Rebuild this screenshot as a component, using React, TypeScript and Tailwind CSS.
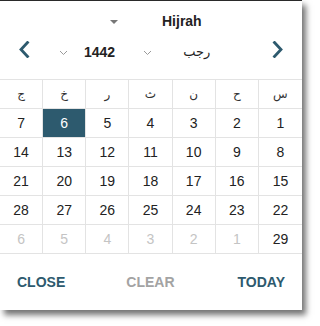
import React from "react"

const teal = "#2d5a6e"

const weekdays = ["ج", "خ", "ر", "ث", "ن", "ح", "س"]

// rows laid out left to right as they appear on screen (calendar is RTL)
const weeks: { d: number; muted?: boolean }[][] = [
  [7, 6, 5, 4, 3, 2, 1].map((d) => ({ d })),
  [14, 13, 12, 11, 10, 9, 8].map((d) => ({ d })),
  [21, 20, 19, 18, 17, 16, 15].map((d) => ({ d })),
  [28, 27, 26, 25, 24, 23, 22].map((d) => ({ d })),
  [
    { d: 6, muted: true },
    { d: 5, muted: true },
    { d: 4, muted: true },
    { d: 3, muted: true },
    { d: 2, muted: true },
    { d: 1, muted: true },
    { d: 29 },
  ],
]

function Chevron({ dir }: { dir: "left" | "right" }) {
  return (
    <svg width="12" height="17" viewBox="0 0 12 17" fill="none">
      <polyline
        points={dir === "left" ? "9.5,1.5 3,8.5 9.5,15.5" : "2.5,1.5 9,8.5 2.5,15.5"}
        stroke={teal}
        strokeWidth="2.8"
        strokeLinecap="square"
      />
    </svg>
  )
}

function SmallDown() {
  return (
    <svg width="9" height="6" viewBox="0 0 9 6" fill="none">
      <polyline points="1,1 4.5,4.5 8,1" stroke="#9a9a9a" strokeWidth="1" />
    </svg>
  )
}

export default function App() {
  return (
    <div className="w-[317px] h-[326px] bg-white font-['Liberation_Sans',Arial,sans-serif]">
      <div className="w-[302px] h-[310px] bg-white border-t border-[#2a2a2a] shadow-[4px_5px_6px_rgba(0,0,0,0.55)] flex flex-col">
        {/* calendar type */}
        <div className="h-[40px] flex items-center">
          <div className="w-[110px]" />
          <svg width="8" height="4" viewBox="0 0 8 4" className="mt-[2px]">
            <polygon points="0,0 8,0 4,4" fill="#777" />
          </svg>
          <div className="w-[44px]" />
          <span className="text-[14px] font-bold text-[#222]">Hijrah</span>
        </div>

        {/* month / year nav */}
        <div className="h-[22px] flex items-center">
          <div className="w-[18px]" />
          <span className="-mt-[5px] flex"><Chevron dir="left" /></span>
          <div className="w-[29px]" />
          <span className="mt-[2px] flex"><SmallDown /></span>
          <div className="w-[16px]" />
          <span className="text-[14px] font-bold text-[#222]">1442</span>
          <div className="w-[28px]" />
          <span className="mt-[2px] flex"><SmallDown /></span>
          <div className="w-[31px]" />
          <span className="text-[13px] text-[#222] font-['DejaVu_Sans',sans-serif]" dir="rtl">رجب</span>
          <div className="flex-1" />
          <span className="-mt-[5px] flex"><Chevron dir="right" /></span>
          <div className="w-[18px]" />
        </div>

        <div className="h-[16px]" />

        {/* grid */}
        <div className="border-t border-[#e3e3e3]">
          <div className="grid grid-cols-7">
            {weekdays.map((w, i) => (
              <div
                key={i}
                className={`h-[29px] border-b border-[#e3e3e3] flex items-center justify-center text-[12px] text-[#333] font-['DejaVu_Sans',sans-serif] ${
                  i < 6 ? "border-r" : ""
                }`}
              >
                {w}
              </div>
            ))}
          </div>
          {weeks.map((row, r) => (
            <div key={r} className="grid grid-cols-7">
              {row.map((c, i) => {
                const selected = r === 0 && c.d === 6
                return (
                  <div
                    key={i}
                    className={`h-[29px] border-b border-[#e3e3e3] flex items-center justify-center text-[14px] ${
                      i < 6 ? "border-r" : ""
                    } ${
                      selected
                        ? "bg-[#2d5a6e] text-white"
                        : c.muted
                        ? "text-[#c4c4c4]"
                        : "text-[#222]"
                    }`}
                  >
                    {c.d}
                  </div>
                )
              })}
            </div>
          ))}
        </div>

        {/* actions */}
        <div className="flex-1 flex items-center justify-between px-[17px] text-[14px] font-bold">
          <span className="text-[#2d5a6e]">CLOSE</span>
          <span className="text-[#a3a3a3] -ml-[2px]">CLEAR</span>
          <span className="text-[#2d5a6e]">TODAY</span>
        </div>
      </div>
    </div>
  )
}
